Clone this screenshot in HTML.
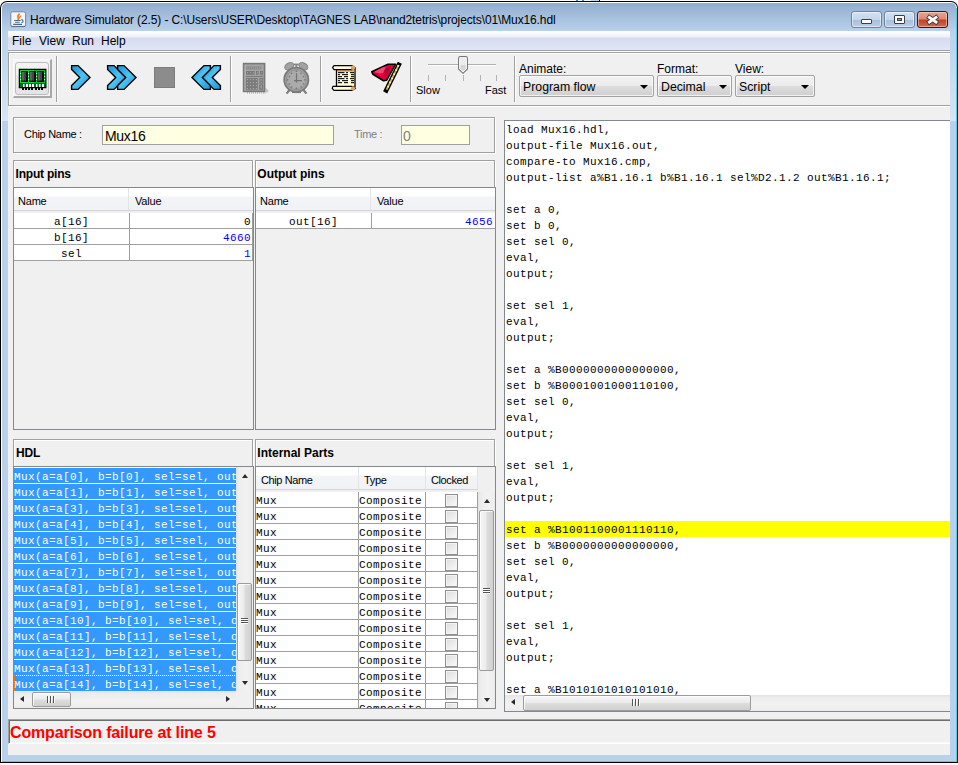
<!DOCTYPE html>
<html><head><meta charset="utf-8">
<style>
*{margin:0;padding:0;box-sizing:border-box}
html,body{width:958px;height:765px;overflow:hidden;background:#fff;font-family:"Liberation Sans",sans-serif;font-size:11px;color:#000}
.a{position:absolute}
.t{position:absolute;white-space:pre;line-height:1}
.m{font-family:"Liberation Mono",monospace;font-size:11px;letter-spacing:0.4px}
.etch{position:absolute;border:1px solid #a0a0a0;box-shadow:1px 1px 0 #fff,inset 1px 1px 0 #fff}
.sp{position:absolute;border:1px solid #828790}
.sep{position:absolute;width:2px;border-left:1px solid #a0a0a0;border-right:1px solid #fff}
.hdr{position:absolute;background:linear-gradient(#fff 0,#fff 8px,#f3f4f8 9px,#f1f2f6 100%);border-bottom:1px solid #d5d5d5}
.hc{position:absolute;top:0;bottom:0;border-right:1px solid #e3e4e8}
.combo{position:absolute;border:1px solid #a2a2a2;border-radius:2px;background:linear-gradient(#f2f2f2 0%,#ebebeb 50%,#dddddd 50%,#cfcfcf 100%);box-shadow:inset 0 0 0 1px rgba(255,255,255,.7)}
.tri{position:absolute;width:0;height:0;border-left:4px solid transparent;border-right:4px solid transparent;border-top:4px solid #000}
.vtr{position:absolute;background:linear-gradient(90deg,#e4e4e4 0,#ededed 3px,#f2f2f2 60%,#ececec 100%)}
.htr{position:absolute;background:linear-gradient(180deg,#e4e4e4 0,#ededed 3px,#f2f2f2 60%,#ececec 100%)}
.vth{position:absolute;border:1px solid #9b9b9b;border-radius:2px;background:linear-gradient(90deg,#f6f6f6 0%,#ececec 45%,#dcdcdc 55%,#d0d0d0 100%);box-shadow:inset 1px 1px 0 rgba(255,255,255,.8)}
.hth{position:absolute;border:1px solid #9b9b9b;border-radius:2px;background:linear-gradient(180deg,#f6f6f6 0%,#ececec 45%,#dcdcdc 55%,#d0d0d0 100%);box-shadow:inset 1px 1px 0 rgba(255,255,255,.8)}
.up{position:absolute;width:0;height:0;border-left:3.5px solid transparent;border-right:3.5px solid transparent;border-bottom:4px solid #2a2a2a}
.dn{position:absolute;width:0;height:0;border-left:3.5px solid transparent;border-right:3.5px solid transparent;border-top:4px solid #2a2a2a}
.lt{position:absolute;width:0;height:0;border-top:3.5px solid transparent;border-bottom:3.5px solid transparent;border-right:4px solid #2a2a2a}
.rt{position:absolute;width:0;height:0;border-top:3.5px solid transparent;border-bottom:3.5px solid transparent;border-left:4px solid #2a2a2a}
.vg{position:absolute;width:7px;height:1px;background:#555;box-shadow:0 1px 0 #fff}
.hg{position:absolute;width:1px;height:7px;background:#555;box-shadow:1px 0 0 #fff}
</style></head><body>
<!-- window frame -->
<div class="a" style="left:0;top:1px;width:958px;height:762px;background:#000;border-radius:7px 7px 0 0"></div>
<div class="a" style="left:1px;top:2px;width:956px;height:760px;background:#fff;border-radius:6px 6px 0 0"></div>
<div class="a" style="left:2px;top:3px;width:954px;height:758px;background:#b9d1ea;border-radius:5px 5px 0 0"></div>
<div class="a" style="left:956px;top:8px;width:1px;height:754px;background:#37d7f0"></div>
<div class="a" style="left:2px;top:761px;width:955px;height:1px;background:#37d7f0"></div>
<div class="a" style="left:2px;top:3px;width:954px;height:28px;background:linear-gradient(#92adcf,#b9d1ea);border-radius:5px 5px 0 0"></div>
<div class="a" style="left:2px;top:31px;width:6px;height:90px;background:linear-gradient(#bad2eb,#d7e5f4)"></div>
<div class="a" style="left:950px;top:31px;width:6px;height:90px;background:linear-gradient(#bad2eb,#d7e5f4)"></div>

<div class="a" style="left:576px;top:0;width:2px;height:1px;background:#3a8fd8"></div><div class="a" style="left:582px;top:0;width:2px;height:1px;background:#3a8fd8"></div><div class="a" style="left:591px;top:0;width:8px;height:1px;background:#c0dcf4"></div><div class="a" style="left:599px;top:0;width:1px;height:1px;background:#000"></div>
<!-- title icon -->
<svg class="a" style="left:0;top:0" width="40" height="40" viewBox="0 0 40 40">
<rect x="10.8" y="11.8" width="14.8" height="14.8" rx="1.8" fill="#f6f6f6" stroke="#6b87a4" stroke-width="1"/><path d="M11.2 26.4 H25.2" stroke="#4b6988" stroke-width="0.8"/>
<path d="M19.6 13.6 C18 15 17.2 16.5 18.4 18 C18.8 18.8 18 19.6 17.8 20" stroke="#ee7a1a" stroke-width="1.6" fill="none"/>
<path d="M21 15.6 C20 16.6 19.2 17.3 19.6 18.4" stroke="#ee7a1a" stroke-width="1.2" fill="none"/>
<path d="M14.2 20.5 H20.6 M15.2 22.3 H19.6 M13.2 24.4 H22" stroke="#4a6c90" stroke-width="1.1" fill="none"/>
<path d="M21.3 19.6 C23.6 19.8 23.6 22.6 21.5 22.6" stroke="#4a6c90" stroke-width="1.1" fill="none"/>
</svg>
<div class="t" id="ttl" style="left:30px;top:14px;font-size:12px;letter-spacing:-0.12px;color:#000">Hardware Simulator (2.5) - C:\Users\USER\Desktop\TAGNES LAB\nand2tetris\projects\01\Mux16.hdl</div>
<!-- caption buttons -->
<div class="a" style="left:851px;top:11px;width:31px;height:17px;border:1px solid #6d84a0;border-radius:3px;background:linear-gradient(#d4e1f0 0%,#c4d6ea 50%,#a7bfdc 51%,#b9cfe6 100%);box-shadow:inset 0 0 0 1px rgba(255,255,255,.5)"></div>
<div class="a" style="left:861px;top:19px;width:11px;height:5px;border:1px solid #3c3c4c;border-radius:1px;background:#fff"></div>
<div class="a" style="left:884px;top:11px;width:31px;height:17px;border:1px solid #6d84a0;border-radius:3px;background:linear-gradient(#d4e1f0 0%,#c4d6ea 50%,#a7bfdc 51%,#b9cfe6 100%);box-shadow:inset 0 0 0 1px rgba(255,255,255,.5)"></div>
<div class="a" style="left:894px;top:15px;width:11px;height:9px;border:1px solid #3c3c4c;border-radius:1px;background:#fff"></div><div class="a" style="left:897px;top:18px;width:5px;height:3px;border:1px solid #3c3c4c;background:#8fa3c0"></div>
<div class="a" style="left:917px;top:11px;width:31px;height:17px;border:1px solid #4a1010;border-radius:3px;background:linear-gradient(#e8a493 0%,#db8a74 45%,#c24326 55%,#d4694a 100%);box-shadow:inset 0 0 0 1px rgba(255,230,220,.5)"></div>
<svg class="a" style="left:917px;top:11px" width="31" height="17" viewBox="0 0 31 17">
<path d="M12.4 6.4 L19 11 M19 6.4 L12.4 11" stroke="#4a3a40" stroke-width="4.6" stroke-linecap="square"/>
<path d="M12.4 6.4 L19 11 M19 6.4 L12.4 11" stroke="#fff" stroke-width="2.8" stroke-linecap="square"/>
</svg>

<!-- client area -->
<div class="a" style="left:8px;top:31px;width:942px;height:724px;background:#f0f0f0"></div>
<!-- menubar -->
<div class="a" style="left:8px;top:31px;width:942px;height:19px;background:linear-gradient(#ffffff 0px,#eef0f8 6px,#d6dbee 7px,#e0e6f6 19px)"></div>
<div class="a" style="left:8px;top:50px;width:942px;height:1px;background:#a0a0a0"></div>
<div class="a" style="left:8px;top:51px;width:942px;height:1px;background:#fff"></div>
<div class="t" style="left:12px;top:35px;font-size:12px">File</div>
<div class="t" style="left:39px;top:35px;font-size:12px">View</div>
<div class="t" style="left:72px;top:35px;font-size:12px">Run</div>
<div class="t" style="left:101px;top:35px;font-size:12px">Help</div>
<!-- toolbar -->
<div class="a" style="left:8px;top:52px;width:942px;height:56px;overflow:hidden"><div class="etch" style="left:0;top:0;width:960px;height:54px"></div></div>

<!-- chip button -->
<div class="a" style="left:13px;top:59px;width:39px;height:39px;background:#f4f4f4;border-right:2px solid #a8a8a8;border-bottom:2px solid #a8a8a8;border-top:1px solid #fafafa;border-left:1px solid #fafafa"></div>
<div class="a" style="left:15px;top:62px;width:34px;height:33px;border:1px solid #bdbdbd;border-radius:3px;background:linear-gradient(#f4f4f4 0,#f0f0f0 11px,#e8e8e8 12px,#e4e4e4 100%)"></div>
<svg class="a" style="left:0;top:0" width="958" height="110" viewBox="0 0 958 110">
<defs>
<linearGradient id="bl" x1="0" y1="0" x2="1" y2="1"><stop offset="0" stop-color="#1f8fd0"/><stop offset="0.5" stop-color="#4ec4f4"/><stop offset="1" stop-color="#1f8fd0"/></linearGradient>
</defs>
<!-- chip icon -->
<rect x="19.4" y="69.4" width="26.4" height="18.2" fill="#00a030" stroke="#000" stroke-width="1.3"/>
<rect x="20" y="70" width="14" height="13" fill="#10d848"/>
<rect x="34" y="70" width="11" height="13" fill="#00b838"/>
<rect x="20" y="83" width="25.2" height="4" fill="#006a20"/>
<g fill="#000"><rect x="21" y="71" width="7" height="11"/><rect x="29" y="71" width="7" height="11"/><rect x="37" y="71" width="7" height="11"/></g>
<g fill="#474747"><rect x="21.6" y="71.6" width="4.6" height="9"/><rect x="29.6" y="71.6" width="4.6" height="9"/><rect x="37.6" y="71.6" width="4.6" height="9"/></g>
<g fill="#6a6a6a"><rect x="22.2" y="72" width="1.4" height="8.5"/><rect x="30.2" y="72" width="1.4" height="8.5"/><rect x="38.2" y="72" width="1.4" height="8.5"/></g>
<g fill="#fff"><rect x="20.2" y="73" width="1" height="1"/><rect x="20.2" y="76" width="1" height="1"/><rect x="20.2" y="79" width="1" height="1"/>
<rect x="28.2" y="73" width="1" height="1"/><rect x="28.2" y="76" width="1" height="1"/><rect x="28.2" y="79" width="1" height="1"/>
<rect x="36.2" y="73" width="1" height="1"/><rect x="36.2" y="76" width="1" height="1"/><rect x="36.2" y="79" width="1" height="1"/>
<rect x="44.2" y="73" width="1" height="1"/><rect x="44.2" y="76" width="1" height="1"/><rect x="44.2" y="79" width="1" height="1"/></g>
<g fill="#fff"><rect x="23" y="84" width="1.5" height="3"/><rect x="26" y="84" width="2" height="3"/><rect x="29" y="84" width="2" height="3"/><rect x="32" y="84" width="2" height="3"/><rect x="36" y="84" width="1.5" height="3"/><rect x="39" y="84" width="1.5" height="3"/><rect x="42" y="84" width="2" height="3"/></g>
<g fill="#000"><rect x="22" y="87" width="2" height="3"/><rect x="25" y="87" width="2" height="3"/><rect x="28" y="87" width="2" height="3"/><rect x="31" y="87" width="2" height="3"/><rect x="35" y="87" width="2" height="3"/><rect x="38" y="87" width="2" height="3"/><rect x="41" y="87" width="2" height="3"/></g>
<!-- separators -->
<g fill="#a0a0a0"><rect x="56" y="56" width="1" height="46"/><rect x="230" y="56" width="1" height="46"/><rect x="320" y="56" width="1" height="46"/><rect x="410" y="56" width="1" height="46"/><rect x="514" y="56" width="1" height="46"/></g>
<g fill="#fff"><rect x="57" y="56" width="1" height="46"/><rect x="231" y="56" width="1" height="46"/><rect x="321" y="56" width="1" height="46"/><rect x="411" y="56" width="1" height="46"/><rect x="515" y="56" width="1" height="46"/></g>
<!-- arrows -->
<g stroke="#000" stroke-width="1.4" stroke-linejoin="miter" fill="url(#bl)">
<path id="chev" d="M71.6 65.6 H78 L90 77.5 L78 89.4 H71.6 V85.6 L79.7 77.5 L71.6 69.4 Z"/>
<path d="M107.6 65.6 H114 L126 77.5 L114 89.4 H107.6 V85.6 L115.7 77.5 L107.6 69.4 Z"/>
<path d="M117.6 65.6 H124 L136 77.5 L124 89.4 H117.6 V85.6 L125.7 77.5 L117.6 69.4 Z"/>
<path d="M220.4 65.6 H214 L202 77.5 L214 89.4 H220.4 V85.6 L212.3 77.5 L220.4 69.4 Z"/>
<path d="M210.4 65.6 H204 L192 77.5 L204 89.4 H210.4 V85.6 L202.3 77.5 L210.4 69.4 Z"/>
</g>
<!-- stop -->
<rect x="154.5" y="67.5" width="20" height="20" fill="#8c8c8c" stroke="#7c7c7c" stroke-width="1"/>
<!-- calculator -->
<rect x="243.6" y="63.6" width="21" height="27.8" fill="#a4a4a4" stroke="#787878" stroke-width="1.6"/>
<rect x="244.6" y="64.6" width="1" height="26" fill="#b4b4b4"/>
<rect x="246" y="66.4" width="15.4" height="3" fill="#8c8c8c"/>
<g fill="#a2a2a2"><rect x="247" y="67.4" width="1" height="1"/><rect x="249" y="67.4" width="1" height="1"/><rect x="251" y="67.4" width="1" height="1"/><rect x="253" y="67.4" width="1" height="1"/><rect x="255" y="67.4" width="1" height="1"/><rect x="257" y="67.4" width="1" height="1"/><rect x="259" y="67.4" width="1" height="1"/></g>
<g fill="#7a7a7a"><rect x="246" y="71" width="8.6" height="3.8"/><rect x="256" y="71" width="2.6" height="3.8"/><rect x="260" y="71" width="3" height="3.8"/><rect x="245.6" y="76" width="17.6" height="1"/></g>
<g fill="#a8a8a8"><rect x="247" y="72.4" width="1" height="1"/><rect x="250" y="72.4" width="1" height="1"/><rect x="253" y="72.4" width="1" height="1"/><rect x="257" y="72.4" width="1" height="1"/><rect x="261" y="72.4" width="1" height="1"/></g>
<rect x="245.8" y="78" width="12" height="11.8" fill="#7a7a7a"/>
<g fill="#a6a6a6"><rect x="246.8" y="79" width="1.2" height="1.2"/><rect x="249.8" y="79" width="1.2" height="1.2"/><rect x="252.8" y="79" width="1.2" height="1.2"/><rect x="255.8" y="79" width="1.2" height="1.2"/><rect x="246.8" y="82" width="1.2" height="1.2"/><rect x="249.8" y="82" width="1.2" height="1.2"/><rect x="252.8" y="82" width="1.2" height="1.2"/><rect x="255.8" y="82" width="1.2" height="1.2"/><rect x="246.8" y="85" width="1.2" height="1.2"/><rect x="249.8" y="85" width="1.2" height="1.2"/><rect x="252.8" y="85" width="1.2" height="1.2"/><rect x="255.8" y="85" width="1.2" height="1.2"/><rect x="246.8" y="88" width="1.2" height="1.2"/><rect x="249.8" y="88" width="1.2" height="1.2"/><rect x="252.8" y="88" width="1.2" height="1.2"/><rect x="255.8" y="88" width="1.2" height="1.2"/></g>
<g fill="#7a7a7a"><rect x="259.2" y="78" width="4" height="2.6"/><rect x="259.2" y="81.2" width="4" height="2.6"/><rect x="259.2" y="84.4" width="4" height="5.4"/></g>
<g fill="#a6a6a6"><rect x="260.6" y="79" width="1.2" height="1"/><rect x="260.6" y="82.2" width="1.2" height="1"/><rect x="260.6" y="85.4" width="1.2" height="3.2"/></g>
<g fill="#909090"><rect x="247" y="92.4" width="1" height="1"/><rect x="249" y="92.4" width="1" height="1"/><rect x="251" y="92.4" width="1" height="1"/><rect x="253" y="92.4" width="1" height="1"/><rect x="255" y="92.4" width="1" height="1"/><rect x="257" y="92.4" width="1" height="1"/><rect x="259" y="92.4" width="1" height="1"/><rect x="261" y="92.4" width="1" height="1"/><rect x="263" y="92.4" width="1" height="1"/><rect x="265.4" y="88.4" width="1" height="1"/><rect x="266.4" y="89.4" width="1" height="1"/><rect x="265.4" y="90.4" width="1" height="1"/><rect x="266.4" y="91.4" width="1" height="1"/><rect x="264.4" y="92.4" width="1" height="1"/><rect x="267.4" y="90.4" width="1" height="1"/></g>
<!-- clock -->
<ellipse cx="289.2" cy="66.2" rx="4.8" ry="3.2" transform="rotate(-32 289.2 66.2)" fill="#a2a2a2" stroke="#868686" stroke-width="1"/>
<ellipse cx="303.4" cy="66.2" rx="4.8" ry="3.2" transform="rotate(32 303.4 66.2)" fill="#a2a2a2" stroke="#868686" stroke-width="1"/>
<rect x="293.8" y="63.6" width="5" height="1.8" fill="#868686"/><rect x="295.4" y="64" width="1.8" height="4.5" fill="#868686"/>
<path d="M289.5 90 L286.6 93.6 M303.5 90 L306.4 93.6" stroke="#7e7e7e" stroke-width="2.2"/>
<rect x="292" y="91.5" width="9" height="1.6" fill="#808080"/>
<circle cx="296.3" cy="79.8" r="12.1" fill="#a6a6a6" stroke="#7a7a7a" stroke-width="1.8"/>
<circle cx="296.3" cy="79.8" r="10" fill="#ababab" stroke="#8e8e8e" stroke-width="1"/>
<g fill="#7a7a7a"><rect x="295.6" y="70.4" width="1.6" height="1.6"/><rect x="295.6" y="87.6" width="1.6" height="1.6"/><rect x="286.8" y="79" width="1.6" height="1.6"/><rect x="304.2" y="79" width="1.6" height="1.6"/>
<rect x="290.8" y="72.6" width="1.5" height="1.5"/><rect x="300.4" y="72.6" width="1.5" height="1.5"/><rect x="288.6" y="75.8" width="1.5" height="1.5"/><rect x="302.8" y="75.8" width="1.5" height="1.5"/>
<rect x="288.6" y="83.2" width="1.5" height="1.5"/><rect x="302.8" y="83.2" width="1.5" height="1.5"/><rect x="290.8" y="86.2" width="1.5" height="1.5"/><rect x="300.4" y="86.2" width="1.5" height="1.5"/></g>
<path d="M296.5 73.2 V82.4 M294 80.6 H302" stroke="#727272" stroke-width="1.2"/>
<!-- scroll -->
<path d="M336.5 69 H355 V87 H336.5 Z" fill="#fffbd6" stroke="#000" stroke-width="1.3"/>
<rect x="337.2" y="69.6" width="17.2" height="2.2" fill="#d9a36e"/>
<path d="M334 65.6 H352 L355.2 68 L352 69.6 H334 L332.6 67.6 Z" fill="#fffbd6" stroke="#000" stroke-width="1.2"/>
<circle cx="353" cy="67.8" r="2.2" fill="#d9a36e"/>
<path d="M333 86.3 H352 L355.2 88.6 L352 90.4 H334 L332.2 88.4 Z" fill="#fffbd6" stroke="#000" stroke-width="1.2"/>
<circle cx="353" cy="88.4" r="2.1" fill="#d9a36e"/>
<g fill="#1a1a1a"><rect x="338" y="72" width="6.5" height="1.2"/><rect x="346" y="72" width="2" height="1.2"/><rect x="350" y="72" width="4" height="1.2"/>
<rect x="338" y="74" width="2" height="1.2"/><rect x="342" y="74" width="6" height="1.2"/><rect x="351" y="74" width="3" height="1.2"/>
<rect x="338" y="76" width="4" height="1.2"/><rect x="344" y="76" width="4" height="1.2"/><rect x="351" y="76" width="3" height="1.2"/>
<rect x="338" y="78" width="6.5" height="1.2"/><rect x="346" y="78" width="2" height="1.2"/><rect x="350" y="78" width="4" height="1.2"/>
<rect x="338" y="80" width="2" height="1.2"/><rect x="342" y="80" width="6" height="1.2"/><rect x="351" y="80" width="3" height="1.2"/>
<rect x="338" y="82" width="4" height="1.2"/><rect x="344" y="82" width="4" height="1.2"/><rect x="351" y="82" width="3" height="1.2"/></g>
<!-- flag -->
<path d="M388 64.3 L395.5 64.3 L386.5 80.3 L383.5 80.8 L373 74.3 L371.8 71.8 Z" fill="#e2003a" stroke="#000" stroke-width="1.6" stroke-linejoin="round"/>
<path d="M374 72 L382 67.5 L386 66.5 L383 73 L380 73.5 Z" fill="#ff5a8c" opacity="0.75"/>
<path d="M385 69 L391 65.5 L386.5 77 L384 77.5 Z" fill="#9a0030" opacity="0.6"/>
<path d="M398.8 64.8 L386.2 90.3" stroke="#000" stroke-width="4.6" stroke-linecap="square"/>
<path d="M398.6 65.2 L386.6 89.6" stroke="#d8b838" stroke-width="1.8"/>
<path d="M398.6 65.2 L386.6 89.6" stroke="#fff4c0" stroke-width="1.8" stroke-dasharray="1.6 3"/>
<!-- slider -->
<rect x="428" y="64" width="68" height="1" fill="#b0b0b0"/><rect x="428" y="65" width="68" height="1" fill="#fff"/>
<g fill="#b4b4b4"><rect x="428" y="75" width="1" height="6"/><rect x="445" y="75" width="1" height="6"/><rect x="463" y="75" width="1" height="6"/><rect x="480" y="75" width="1" height="6"/><rect x="496" y="75" width="1" height="6"/></g>
<path d="M458.6 58.4 Q458.6 56.6 460.4 56.6 H465.6 Q467.4 56.6 467.4 58.4 V69 L463 73.3 L458.6 69 Z" fill="#ececec" stroke="#747474" stroke-width="1.1"/><path d="M459.6 58.2 Q459.6 57.6 460.4 57.6 H465.6 Q466.4 57.6 466.4 58.2 V68.6 L463 72 L459.6 68.6 Z" fill="none" stroke="#fff" stroke-width="0.8"/>
<path d="M460.2 65 H465.8 V68.4 L463 71.2 L460.2 68.4 Z" fill="#d6d6d6"/>
</svg>
<div class="t" style="left:416px;top:85px;font-size:11px">Slow</div>
<div class="t" style="left:485px;top:85px;font-size:11px">Fast</div>
<!-- combos -->
<div class="t" style="left:519px;top:63px;font-size:12px">Animate:</div>
<div class="combo" style="left:519px;top:75px;width:135px;height:22px"></div>
<div class="t" style="left:523px;top:80.5px;font-size:12.3px">Program flow</div>
<div class="tri" style="left:640px;top:85px"></div>
<div class="t" style="left:657px;top:63px;font-size:12px">Format:</div>
<div class="combo" style="left:657px;top:75px;width:75px;height:22px"></div>
<div class="t" style="left:661px;top:80.5px;font-size:12.3px">Decimal</div>
<div class="tri" style="left:719px;top:85px"></div>
<div class="t" style="left:735px;top:63px;font-size:12px">View:</div>
<div class="combo" style="left:735px;top:75px;width:80px;height:22px"></div>
<div class="t" style="left:739px;top:80.5px;font-size:12.3px">Script</div>
<div class="tri" style="left:801px;top:85px"></div>

<!-- chip panel -->
<div class="etch" style="left:13px;top:117px;width:482px;height:36px"></div>
<div class="t" style="left:24px;top:128.6px;font-size:11px;letter-spacing:-0.3px">Chip Name :</div>
<div class="a" style="left:102px;top:125px;width:232px;height:20px;border:1px solid #a0a0a0;background:#ffffe1"></div>
<div class="t" style="left:105px;top:129px;font-size:14px;letter-spacing:-0.3px">Mux16</div>
<div class="t" style="left:354px;top:128.6px;font-size:11px;letter-spacing:-0.3px;color:#808080">Time :</div>
<div class="a" style="left:401px;top:125px;width:69px;height:20px;border:1px solid #a0a0a0;background:#ffffe1"></div>
<div class="t" style="left:403px;top:129px;font-size:14px;color:#808080">0</div>
<!-- input pins -->
<div class="etch" style="left:13px;top:160px;width:240px;height:269px"></div>
<div class="t" style="left:15.5px;top:168px;font-size:12px;font-weight:bold;letter-spacing:-0.2px">Input pins</div>
<div class="sp" style="left:13px;top:187px;width:241px;height:243px;background:#f0f0f0">
  <div class="hdr" style="left:0;top:0;width:239px;height:23px">
    <div class="hc" style="left:0;width:115px"></div>
    <div class="t" style="left:4px;top:8px;letter-spacing:-0.2px">Name</div>
    <div class="t" style="left:121px;top:8px;letter-spacing:-0.2px">Value</div>
  </div>
  <div class="a" style="left:0;top:25px;width:239px;height:48px;background:#fff"></div>
  <div class="a" style="left:0;top:40px;width:239px;height:1px;background:#a0a0a0"></div>
  <div class="a" style="left:0;top:56px;width:239px;height:1px;background:#a0a0a0"></div>
  <div class="a" style="left:0;top:72px;width:239px;height:1px;background:#a0a0a0"></div>
  <div class="a" style="left:115px;top:25px;width:1px;height:48px;background:#a0a0a0"></div>
  <div class="a" style="left:238px;top:25px;width:1px;height:48px;background:#a0a0a0"></div>
  <div class="t m" style="left:40px;top:29px">a[16]</div>
  <div class="t m" style="left:40px;top:45px">b[16]</div>
  <div class="t m" style="left:47px;top:61px">sel</div>
  <div class="t m" style="left:230px;top:29px">0</div>
  <div class="t m" style="left:209px;top:45px;color:#0000ff">4660</div>
  <div class="t m" style="left:230px;top:61px;color:#0000ff">1</div>
</div>
<!-- output pins -->
<div class="etch" style="left:255px;top:160px;width:240px;height:269px"></div>
<div class="t" style="left:257.3px;top:168px;font-size:12px;font-weight:bold;letter-spacing:0px">Output pins</div>
<div class="sp" style="left:255px;top:187px;width:241px;height:243px;background:#f0f0f0">
  <div class="hdr" style="left:0;top:0;width:239px;height:23px">
    <div class="hc" style="left:0;width:115px"></div>
    <div class="t" style="left:4px;top:8px;letter-spacing:-0.2px">Name</div>
    <div class="t" style="left:121px;top:8px;letter-spacing:-0.2px">Value</div>
  </div>
  <div class="a" style="left:0;top:25px;width:239px;height:16px;background:#fff"></div>
  <div class="a" style="left:0;top:40px;width:239px;height:1px;background:#a0a0a0"></div>
  <div class="a" style="left:115px;top:25px;width:1px;height:16px;background:#a0a0a0"></div>
  <div class="t m" style="left:33px;top:29px">out[16]</div>
  <div class="t m" style="left:209px;top:29px;color:#0000ff">4656</div>
</div>

<!-- HDL -->
<div class="etch" style="left:13px;top:439px;width:240px;height:269px"></div>
<div class="t" style="left:16px;top:447px;font-size:12px;font-weight:bold;letter-spacing:-0.2px">HDL</div>
<div class="sp" style="left:13px;top:466px;width:241px;height:243px;background:#f0f0f0;overflow:hidden">
  <div class="a" style="left:0;top:0;width:222px;height:224px;background:#fff;overflow:hidden"><div class="a" style="left:0;top:0px;width:222px;height:16px;background:#3399ff;border-top:1px solid #fff"></div><div class="t m" style="left:0px;top:5px;color:#fff">Mux(a=a[0], b=b[0], sel=sel, out=out[0]);</div><div class="a" style="left:0;top:16px;width:222px;height:16px;background:#3399ff;border-top:1px solid #fff"></div><div class="t m" style="left:0px;top:21px;color:#fff">Mux(a=a[1], b=b[1], sel=sel, out=out[1]);</div><div class="a" style="left:0;top:32px;width:222px;height:16px;background:#3399ff;border-top:1px solid #fff"></div><div class="t m" style="left:0px;top:37px;color:#fff">Mux(a=a[3], b=b[3], sel=sel, out=out[3]);</div><div class="a" style="left:0;top:48px;width:222px;height:16px;background:#3399ff;border-top:1px solid #fff"></div><div class="t m" style="left:0px;top:53px;color:#fff">Mux(a=a[4], b=b[4], sel=sel, out=out[4]);</div><div class="a" style="left:0;top:64px;width:222px;height:16px;background:#3399ff;border-top:1px solid #fff"></div><div class="t m" style="left:0px;top:69px;color:#fff">Mux(a=a[5], b=b[5], sel=sel, out=out[5]);</div><div class="a" style="left:0;top:80px;width:222px;height:16px;background:#3399ff;border-top:1px solid #fff"></div><div class="t m" style="left:0px;top:85px;color:#fff">Mux(a=a[6], b=b[6], sel=sel, out=out[6]);</div><div class="a" style="left:0;top:96px;width:222px;height:16px;background:#3399ff;border-top:1px solid #fff"></div><div class="t m" style="left:0px;top:101px;color:#fff">Mux(a=a[7], b=b[7], sel=sel, out=out[7]);</div><div class="a" style="left:0;top:112px;width:222px;height:16px;background:#3399ff;border-top:1px solid #fff"></div><div class="t m" style="left:0px;top:117px;color:#fff">Mux(a=a[8], b=b[8], sel=sel, out=out[8]);</div><div class="a" style="left:0;top:128px;width:222px;height:16px;background:#3399ff;border-top:1px solid #fff"></div><div class="t m" style="left:0px;top:133px;color:#fff">Mux(a=a[9], b=b[9], sel=sel, out=out[9]);</div><div class="a" style="left:0;top:144px;width:222px;height:16px;background:#3399ff;border-top:1px solid #fff"></div><div class="t m" style="left:0px;top:149px;color:#fff">Mux(a=a[10], b=b[10], sel=sel, out=out[10]);</div><div class="a" style="left:0;top:160px;width:222px;height:16px;background:#3399ff;border-top:1px solid #fff"></div><div class="t m" style="left:0px;top:165px;color:#fff">Mux(a=a[11], b=b[11], sel=sel, out=out[11]);</div><div class="a" style="left:0;top:176px;width:222px;height:16px;background:#3399ff;border-top:1px solid #fff"></div><div class="t m" style="left:0px;top:181px;color:#fff">Mux(a=a[12], b=b[12], sel=sel, out=out[12]);</div><div class="a" style="left:0;top:192px;width:222px;height:16px;background:#3399ff;border-top:1px solid #fff"></div><div class="t m" style="left:0px;top:197px;color:#fff">Mux(a=a[13], b=b[13], sel=sel, out=out[13]);</div><div class="a" style="left:0;top:208px;width:222px;height:16px;background:#3399ff;border-top:1px solid #fff"></div><div class="t m" style="left:0px;top:213px;color:#fff">Mux(a=a[14], b=b[14], sel=sel, out=out[14]);</div>
  <div class="a" style="left:0;top:208px;width:222px;height:16px;border:1px dotted #f07818"></div></div>
  <div class="vtr" style="left:222px;top:0;width:17px;height:224px"></div>
<div class="up" style="left:228px;top:7px"></div>
<div class="vth" style="left:223px;top:116px;width:15px;height:78px"></div>
<div class="vg" style="left:227px;top:151px"></div><div class="vg" style="left:227px;top:153px"></div><div class="vg" style="left:227px;top:155px"></div>
<div class="dn" style="left:228px;top:214px"></div>
<div class="htr" style="left:0;top:224px;width:222px;height:17px"></div>
<div class="lt" style="left:6px;top:229px"></div>
<div class="hth" style="left:18px;top:225px;width:39px;height:15px"></div>
<div class="hg" style="left:33px;top:229px"></div><div class="hg" style="left:36px;top:229px"></div><div class="hg" style="left:39px;top:229px"></div>
<div class="rt" style="left:212px;top:229px"></div>
</div>
<!-- Internal Parts -->
<div class="etch" style="left:255px;top:439px;width:240px;height:269px"></div>
<div class="t" style="left:257.3px;top:447px;font-size:12px;font-weight:bold;letter-spacing:0px">Internal Parts</div>
<div class="sp" style="left:255px;top:466px;width:241px;height:243px;background:#f0f0f0;overflow:hidden">
  <div class="hdr" style="left:0;top:0;width:222px;height:23px">
    <div class="hc" style="left:0;width:103px"></div>
    <div class="hc" style="left:103px;width:67px"></div>
    <div class="hc" style="left:170px;width:52px"></div>
    <div class="t" style="left:5px;top:8px;letter-spacing:-0.4px">Chip Name</div>
    <div class="t" style="left:108px;top:8px;letter-spacing:-0.3px">Type</div>
    <div class="t" style="left:175px;top:8px;letter-spacing:-0.4px">Clocked</div>
  </div>
  <div class="a" style="left:0;top:25px;width:222px;height:216px;background:#fff;overflow:hidden">
  <div class="a" style="left:0;top:-25px;width:222px;height:241px"><div class="a" style="left:0;top:40px;width:222px;height:1px;background:#a0a0a0"></div><div class="t m" style="left:0px;top:29px">Mux</div><div class="t m" style="left:103px;top:29px">Composite</div><div class="a" style="left:189px;top:27px;width:13px;height:13px;border:1px solid #8f8f8f;background:linear-gradient(135deg,#dcdcdc,#fbfbfb);box-shadow:inset 0 0 0 1px #f4f4f4"></div><div class="a" style="left:0;top:56px;width:222px;height:1px;background:#a0a0a0"></div><div class="t m" style="left:0px;top:45px">Mux</div><div class="t m" style="left:103px;top:45px">Composite</div><div class="a" style="left:189px;top:43px;width:13px;height:13px;border:1px solid #8f8f8f;background:linear-gradient(135deg,#dcdcdc,#fbfbfb);box-shadow:inset 0 0 0 1px #f4f4f4"></div><div class="a" style="left:0;top:72px;width:222px;height:1px;background:#a0a0a0"></div><div class="t m" style="left:0px;top:61px">Mux</div><div class="t m" style="left:103px;top:61px">Composite</div><div class="a" style="left:189px;top:59px;width:13px;height:13px;border:1px solid #8f8f8f;background:linear-gradient(135deg,#dcdcdc,#fbfbfb);box-shadow:inset 0 0 0 1px #f4f4f4"></div><div class="a" style="left:0;top:88px;width:222px;height:1px;background:#a0a0a0"></div><div class="t m" style="left:0px;top:77px">Mux</div><div class="t m" style="left:103px;top:77px">Composite</div><div class="a" style="left:189px;top:75px;width:13px;height:13px;border:1px solid #8f8f8f;background:linear-gradient(135deg,#dcdcdc,#fbfbfb);box-shadow:inset 0 0 0 1px #f4f4f4"></div><div class="a" style="left:0;top:104px;width:222px;height:1px;background:#a0a0a0"></div><div class="t m" style="left:0px;top:93px">Mux</div><div class="t m" style="left:103px;top:93px">Composite</div><div class="a" style="left:189px;top:91px;width:13px;height:13px;border:1px solid #8f8f8f;background:linear-gradient(135deg,#dcdcdc,#fbfbfb);box-shadow:inset 0 0 0 1px #f4f4f4"></div><div class="a" style="left:0;top:120px;width:222px;height:1px;background:#a0a0a0"></div><div class="t m" style="left:0px;top:109px">Mux</div><div class="t m" style="left:103px;top:109px">Composite</div><div class="a" style="left:189px;top:107px;width:13px;height:13px;border:1px solid #8f8f8f;background:linear-gradient(135deg,#dcdcdc,#fbfbfb);box-shadow:inset 0 0 0 1px #f4f4f4"></div><div class="a" style="left:0;top:136px;width:222px;height:1px;background:#a0a0a0"></div><div class="t m" style="left:0px;top:125px">Mux</div><div class="t m" style="left:103px;top:125px">Composite</div><div class="a" style="left:189px;top:123px;width:13px;height:13px;border:1px solid #8f8f8f;background:linear-gradient(135deg,#dcdcdc,#fbfbfb);box-shadow:inset 0 0 0 1px #f4f4f4"></div><div class="a" style="left:0;top:152px;width:222px;height:1px;background:#a0a0a0"></div><div class="t m" style="left:0px;top:141px">Mux</div><div class="t m" style="left:103px;top:141px">Composite</div><div class="a" style="left:189px;top:139px;width:13px;height:13px;border:1px solid #8f8f8f;background:linear-gradient(135deg,#dcdcdc,#fbfbfb);box-shadow:inset 0 0 0 1px #f4f4f4"></div><div class="a" style="left:0;top:168px;width:222px;height:1px;background:#a0a0a0"></div><div class="t m" style="left:0px;top:157px">Mux</div><div class="t m" style="left:103px;top:157px">Composite</div><div class="a" style="left:189px;top:155px;width:13px;height:13px;border:1px solid #8f8f8f;background:linear-gradient(135deg,#dcdcdc,#fbfbfb);box-shadow:inset 0 0 0 1px #f4f4f4"></div><div class="a" style="left:0;top:184px;width:222px;height:1px;background:#a0a0a0"></div><div class="t m" style="left:0px;top:173px">Mux</div><div class="t m" style="left:103px;top:173px">Composite</div><div class="a" style="left:189px;top:171px;width:13px;height:13px;border:1px solid #8f8f8f;background:linear-gradient(135deg,#dcdcdc,#fbfbfb);box-shadow:inset 0 0 0 1px #f4f4f4"></div><div class="a" style="left:0;top:200px;width:222px;height:1px;background:#a0a0a0"></div><div class="t m" style="left:0px;top:189px">Mux</div><div class="t m" style="left:103px;top:189px">Composite</div><div class="a" style="left:189px;top:187px;width:13px;height:13px;border:1px solid #8f8f8f;background:linear-gradient(135deg,#dcdcdc,#fbfbfb);box-shadow:inset 0 0 0 1px #f4f4f4"></div><div class="a" style="left:0;top:216px;width:222px;height:1px;background:#a0a0a0"></div><div class="t m" style="left:0px;top:205px">Mux</div><div class="t m" style="left:103px;top:205px">Composite</div><div class="a" style="left:189px;top:203px;width:13px;height:13px;border:1px solid #8f8f8f;background:linear-gradient(135deg,#dcdcdc,#fbfbfb);box-shadow:inset 0 0 0 1px #f4f4f4"></div><div class="a" style="left:0;top:232px;width:222px;height:1px;background:#a0a0a0"></div><div class="t m" style="left:0px;top:221px">Mux</div><div class="t m" style="left:103px;top:221px">Composite</div><div class="a" style="left:189px;top:219px;width:13px;height:13px;border:1px solid #8f8f8f;background:linear-gradient(135deg,#dcdcdc,#fbfbfb);box-shadow:inset 0 0 0 1px #f4f4f4"></div><div class="a" style="left:0;top:248px;width:222px;height:1px;background:#a0a0a0"></div><div class="t m" style="left:0px;top:237px">Mux</div><div class="t m" style="left:103px;top:237px">Composite</div><div class="a" style="left:189px;top:235px;width:13px;height:13px;border:1px solid #8f8f8f;background:linear-gradient(135deg,#dcdcdc,#fbfbfb);box-shadow:inset 0 0 0 1px #f4f4f4"></div></div>
  <div class="a" style="left:102px;top:0;width:1px;height:216px;background:#a0a0a0"></div>
  <div class="a" style="left:169px;top:0;width:1px;height:216px;background:#a0a0a0"></div>
  <div class="a" style="left:221px;top:0;width:1px;height:216px;background:#a0a0a0"></div>
  </div>
  <div class="vtr" style="left:222px;top:25px;width:17px;height:216px"></div>
<div class="up" style="left:228px;top:32px"></div>
<div class="vth" style="left:223px;top:43px;width:15px;height:161px"></div>
<div class="vg" style="left:227px;top:121px"></div><div class="vg" style="left:227px;top:123px"></div><div class="vg" style="left:227px;top:125px"></div>
<div class="dn" style="left:228px;top:231px"></div>
</div>
<!-- Script -->
<div class="a" style="left:504px;top:120px;width:446px;height:592px;border:1px solid #828790;border-right:none;background:#fff;overflow:hidden">
  <div class="a" style="left:0;top:400px;width:445px;height:16px;background:#ffff00"></div>
  <div class="t m" style="left:1px;top:4px">load Mux16.hdl,</div><div class="t m" style="left:1px;top:20px">output-file Mux16.out,</div><div class="t m" style="left:1px;top:36px">compare-to Mux16.cmp,</div><div class="t m" style="left:1px;top:52px">output-list a%B1.16.1 b%B1.16.1 sel%D2.1.2 out%B1.16.1;</div><div class="t m" style="left:1px;top:84px">set a 0,</div><div class="t m" style="left:1px;top:100px">set b 0,</div><div class="t m" style="left:1px;top:116px">set sel 0,</div><div class="t m" style="left:1px;top:132px">eval,</div><div class="t m" style="left:1px;top:148px">output;</div><div class="t m" style="left:1px;top:180px">set sel 1,</div><div class="t m" style="left:1px;top:196px">eval,</div><div class="t m" style="left:1px;top:212px">output;</div><div class="t m" style="left:1px;top:244px">set a %B0000000000000000,</div><div class="t m" style="left:1px;top:260px">set b %B0001001000110100,</div><div class="t m" style="left:1px;top:276px">set sel 0,</div><div class="t m" style="left:1px;top:292px">eval,</div><div class="t m" style="left:1px;top:308px">output;</div><div class="t m" style="left:1px;top:340px">set sel 1,</div><div class="t m" style="left:1px;top:356px">eval,</div><div class="t m" style="left:1px;top:372px">output;</div><div class="t m" style="left:1px;top:404px">set a %B1001100001110110,</div><div class="t m" style="left:1px;top:420px">set b %B0000000000000000,</div><div class="t m" style="left:1px;top:436px">set sel 0,</div><div class="t m" style="left:1px;top:452px">eval,</div><div class="t m" style="left:1px;top:468px">output;</div><div class="t m" style="left:1px;top:500px">set sel 1,</div><div class="t m" style="left:1px;top:516px">eval,</div><div class="t m" style="left:1px;top:532px">output;</div><div class="t m" style="left:1px;top:564px">set a %B1010101010101010,</div>
  <div class="htr" style="left:0;top:574px;width:445px;height:16px"></div>
<div class="lt" style="left:6px;top:578px"></div>
<div class="hth" style="left:18px;top:574px;width:228px;height:16px"></div>
<div class="hg" style="left:127px;top:578px"></div><div class="hg" style="left:130px;top:578px"></div><div class="hg" style="left:133px;top:578px"></div>
</div>
<!-- status -->
<div class="a" style="left:8px;top:719px;width:942px;height:25px;border-top:1px solid #a0a0a0;border-left:1px solid #a0a0a0;border-bottom:1px solid #fff;box-shadow:inset 1px 1px 0 #6e6e6e,inset 0 -1px 0 #f8f8f8"></div>
<div class="t" style="left:10px;top:725px;font-size:16px;font-weight:bold;color:#ff0000;letter-spacing:-0.15px">Comparison failure at line 5</div>


</body></html>
